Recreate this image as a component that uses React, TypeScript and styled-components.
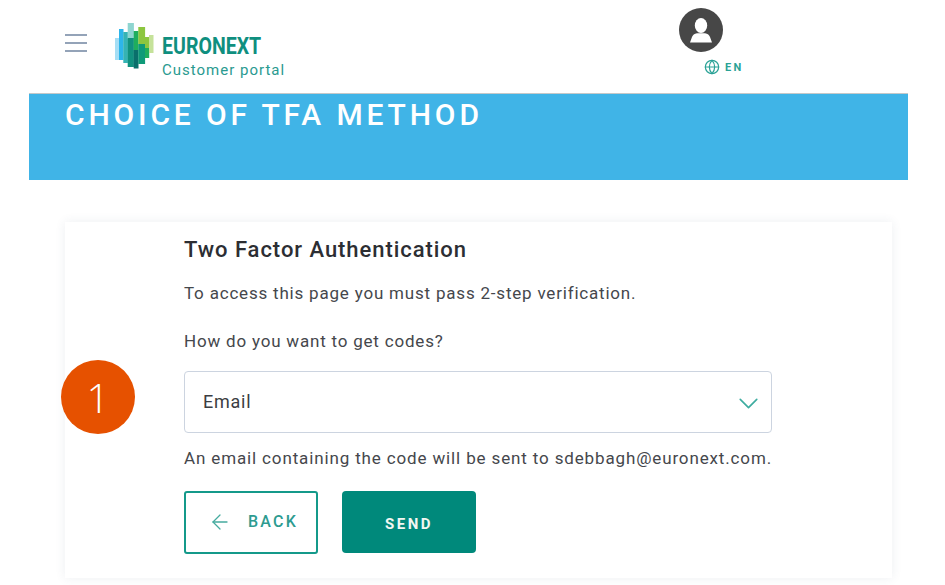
import React from 'react';
import styled, { createGlobalStyle } from 'styled-components';
import { ArrowLeft, ChevronDown, Globe } from 'lucide-react';

const GlobalStyle = createGlobalStyle`
  html, body {
    margin: 0;
    padding: 0;
    background: #fff;
  }
  body {
    font-family: "Roboto", "Liberation Sans", sans-serif;
    color: #2f3136;
    overflow: hidden;
  }
  * { box-sizing: border-box; }
`;

const logoBars = [
  { x: 115, w: 4.5, y: 38, h: 22, fill: '#a5def5' },
  { x: 119, w: 4.5, y: 29, h: 31, fill: '#2db5ea' },
  { x: 123.3, w: 4.6, y: 32, h: 31, fill: '#35b3b4' },
  { x: 127.7, w: 6.2, y: 23, h: 16, fill: '#8fd5d0' },
  { x: 127.7, w: 6.2, y: 38, h: 29, fill: '#11917f' },
  { x: 133.7, w: 4.8, y: 31, h: 19, fill: '#1fae5c' },
  { x: 133.7, w: 4.8, y: 50, h: 18.5, fill: '#0a6f6b' },
  { x: 138.3, w: 6.8, y: 27, h: 17, fill: '#8cc63f' },
  { x: 138.3, w: 6.8, y: 44, h: 20, fill: '#0f9a78' },
  { x: 145, w: 4.2, y: 37, h: 11, fill: '#8cc63f' },
  { x: 145, w: 4.2, y: 48, h: 10, fill: '#1fae5c' },
  { x: 149, w: 4.5, y: 35, h: 18, fill: '#c5e29a' },
];

const Logo = () => (
  <svg width="39" height="46" viewBox="115 23 39 46">
    {logoBars.map((b) => (
      <rect key={`${b.x}-${b.y}`} x={b.x} y={b.y} width={b.w} height={b.h} fill={b.fill} />
    ))}
  </svg>
);

const UserIcon = () => (
  <svg width="44" height="44" viewBox="0 0 44 44">
    <circle cx="22" cy="22" r="22" fill="#474747" />
    <ellipse cx="22" cy="17.5" rx="6.2" ry="7.6" fill="#fff" />
    <path d="M11 34.5 L13 29 Q14 26 18 25.2 L26 25.2 Q30 26 31 29 L33 34.5 Z" fill="#fff" />
  </svg>
);

const App: React.FC = () => (
  <Page>
    <GlobalStyle />
    <Header>
      <MenuButton aria-label="menu">
        <MenuLine />
        <MenuLine />
        <MenuLine />
      </MenuButton>
      <Brand>
        <Logo />
        <BrandText>
          <BrandName>EURONEXT</BrandName>
          <BrandSub>Customer portal</BrandSub>
        </BrandText>
      </Brand>
      <Account>
        <UserIcon />
        <Language>
          <Globe size={16} strokeWidth={1.8} color="#2aa296" />
          <span>EN</span>
        </Language>
      </Account>
    </Header>
    <Banner>
      <BannerTitle>CHOICE OF TFA METHOD</BannerTitle>
    </Banner>
    <Card>
      <StepBadge>1</StepBadge>
      <Title>Two Factor Authentication</Title>
      <Text>To access this page you must pass 2-step verification.</Text>
      <Question>How do you want to get codes?</Question>
      <SelectBox>
        <span>Email</span>
        <ChevronDown size={33} strokeWidth={1.2} color="#3eaca0" />
      </SelectBox>
      <Hint>An email containing the code will be sent to sdebbagh@euronext.com.</Hint>
      <Actions>
        <BackButton type="button">
          <ArrowLeft size={24} strokeWidth={1.3} color="#45ab9f" />
          <span>BACK</span>
        </BackButton>
        <SendButton type="button">SEND</SendButton>
      </Actions>
    </Card>
  </Page>
);

const Page = styled.div`
  width: 945px;
  height: 585px;
  overflow: hidden;
  background: #fff;
`;

const Header = styled.header`
  height: 94px;
  margin: 0 37px 0 29px;
  border-bottom: 1px solid #c4c8c9;
  display: flex;
  align-items: flex-start;
`;

const MenuButton = styled.button`
  width: 22px;
  margin: 34px 0 0 36px;
  padding: 0;
  border: 0;
  background: none;
  display: flex;
  flex-direction: column;
  gap: 6px;
`;

const MenuLine = styled.span`
  height: 2px;
  background: #94a3b8;
`;

const Brand = styled.div`
  margin: 23px 0 0 28px;
  display: flex;
  align-items: flex-start;
  width: 564px;
`;

const BrandText = styled.div`
  margin: 12px 0 0 8px;
  display: flex;
  flex-direction: column;
`;

const BrandName = styled.div`
  font-size: 23px;
  line-height: 24px;
  font-weight: 700;
  color: #0f8f7f;
  transform-origin: left;
  transform: scaleX(0.85);
`;

const BrandSub = styled.div`
  margin-top: 2px;
  font-size: 15px;
  line-height: 18px;
  letter-spacing: 1px;
  color: #2a9a90;
  white-space: nowrap;
`;

const Account = styled.div`
  margin-top: 8px;
  width: 70px;
  display: flex;
  flex-direction: column;
  align-items: flex-start;
`;

const Language = styled.div`
  margin: 7px 0 0 25px;
  display: flex;
  align-items: center;
  gap: 5px;
  font-size: 11px;
  font-weight: 700;
  letter-spacing: 2.3px;
  color: #2aa296;
`;

const Banner = styled.div`
  height: 86px;
  margin: 0 37px 0 29px;
  padding: 3px 0 0 36px;
  background: #40b4e7;
`;

const BannerTitle = styled.h1`
  margin: 0;
  font-size: 30px;
  line-height: 36px;
  font-weight: 500;
  letter-spacing: 3.85px;
  color: #fff;
  font-family: "Roboto", sans-serif;
`;

const Card = styled.section`
  position: relative;
  height: 356px;
  margin: 42px 53px 0 65px;
  padding: 14px 0 0 119px;
  background: #fff;
  box-shadow: 0 0 10px rgba(60, 80, 110, 0.09);
`;

const StepBadge = styled.div`
  position: absolute;
  left: -4px;
  top: 138px;
  width: 74px;
  height: 74px;
  border-radius: 50%;
  background: #e65100;
  color: #fff;
  font-family: "Open Sans", sans-serif;
  font-size: 40px;
  font-weight: 300;
  display: flex;
  align-items: center;
  justify-content: center;
`;

const Title = styled.h2`
  margin: 0;
  font-size: 22px;
  line-height: 28px;
  font-weight: 500;
  letter-spacing: 0.95px;
  color: #2c2e33;
`;

const Text = styled.p`
  margin: 18px 0 0;
  font-size: 17px;
  line-height: 22px;
  letter-spacing: 0.8px;
  color: #45474c;
`;

const Question = styled(Text)`
  margin-top: 26px;
`;

const SelectBox = styled.div`
  margin-top: 19px;
  width: 588px;
  height: 62px;
  padding: 0 0 2px 18px;
  border: 1px solid #ccd4e0;
  border-radius: 4px;
  display: flex;
  align-items: center;
  justify-content: space-between;
  font-size: 18px;
  letter-spacing: 0.75px;
  color: #3b3d42;
  & svg {
    margin: 5px 6px 0 0;
  }
`;

const Hint = styled(Text)`
  margin-top: 14px;
  letter-spacing: 0.86px;
  white-space: nowrap;
`;

const Actions = styled.div`
  margin-top: 22px;
  display: flex;
  gap: 24px;
`;

const BackButton = styled.button`
  width: 134px;
  height: 63px;
  border: 2px solid #14998a;
  border-radius: 3px;
  background: #fff;
  display: flex;
  align-items: center;
  justify-content: center;
  gap: 16px;
  padding: 0 0 2px 4px;
  font-family: "Roboto", sans-serif;
  font-size: 16px;
  font-weight: 500;
  letter-spacing: 2.2px;
  color: #2d9b90;
`;

const SendButton = styled.button`
  width: 134px;
  height: 62px;
  border: 0;
  border-radius: 4px;
  padding: 4px 0 0;
  background: #00897b;
  font-family: "Roboto", sans-serif;
  font-size: 15px;
  font-weight: 700;
  letter-spacing: 2.5px;
  color: #f2f7f2;
`;

export default App;
